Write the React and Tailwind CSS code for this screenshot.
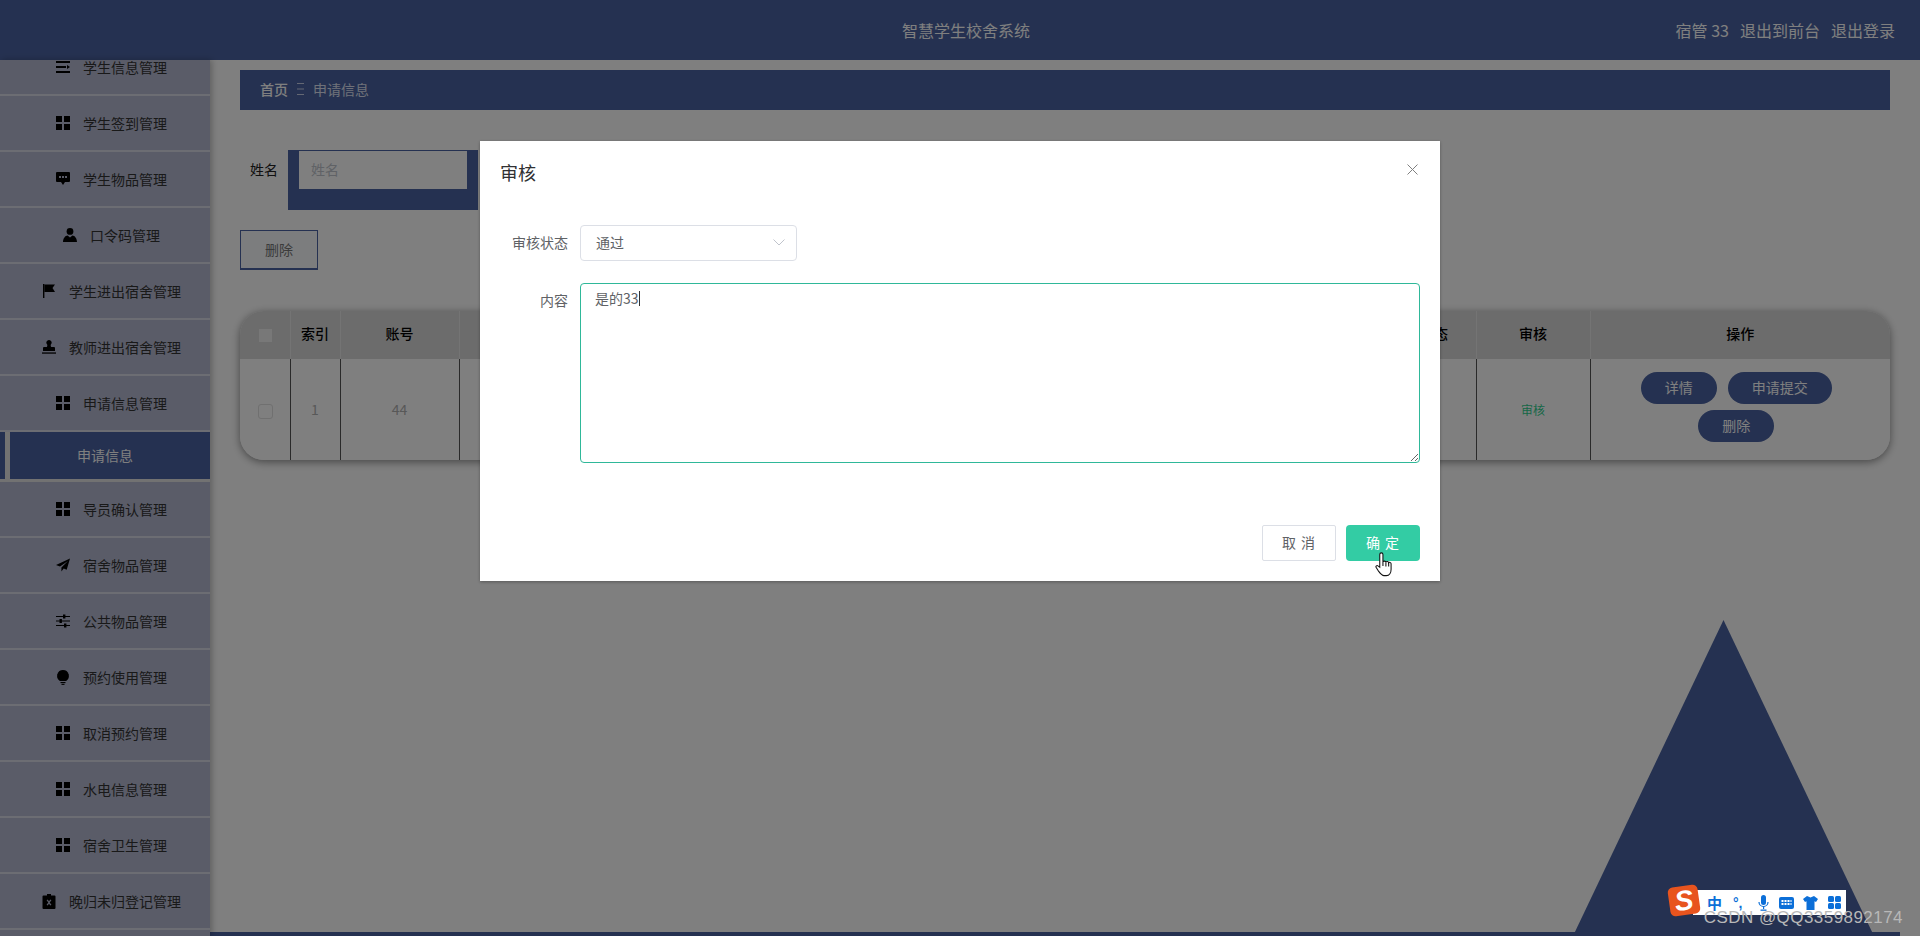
import React from 'react';

// Sidebar glyphs, all on a 14-unit box
const Grid = () => (
  <svg viewBox="0 0 14 14" className="w-[14px] h-[14px]" fill="#000">
    <rect x="0" y="0" width="6" height="6" /><rect x="8" y="0" width="6" height="6" />
    <rect x="0" y="8" width="6" height="6" /><rect x="8" y="8" width="6" height="6" />
  </svg>
);
const Bars = () => (
  <svg viewBox="0 0 14 14" className="w-[14px] h-[14px]" fill="#000">
    <rect x="0" y="1" width="14" height="2" /><rect x="0" y="6" width="10" height="2" />
    <path d="M11 5l3 2-3 2z" /><rect x="0" y="11" width="14" height="2" />
  </svg>
);
const Chat = () => (
  <svg viewBox="0 0 14 14" className="w-[14px] h-[14px]" fill="#000">
    <path fillRule="evenodd" d="M1 0h12a1 1 0 0 1 1 1v8a1 1 0 0 1-1 1H9l-2 3-2-3H1a1 1 0 0 1-1-1V1a1 1 0 0 1 1-1zM3 4v2h2V4zm3 0v2h2V4zm3 0v2h2V4z" />
  </svg>
);
const User = () => (
  <svg viewBox="0 0 14 14" className="w-[14px] h-[14px]" fill="#000">
    <circle cx="7" cy="3.4" r="3.4" /><path d="M0 14c0-4 2.4-6.4 4.6-6.6L7 9.4l2.4-2c2.2.2 4.6 2.6 4.6 6.6z" />
  </svg>
);
const Flag = () => (
  <svg viewBox="0 0 14 14" className="w-[14px] h-[14px]" fill="#000">
    <rect x="1" y="0" width="1.4" height="14" /><path d="M2.4 .5H13L10.5 4 13 8H2.4z" />
  </svg>
);
const Stamp = () => (
  <svg viewBox="0 0 14 14" className="w-[14px] h-[14px]" fill="#000">
    <path d="M7 0a2.6 2.6 0 0 1 2 4.3c-.5.8-.4 1.8.2 2.6H12a1 1 0 0 1 1 1V11H1V7.9a1 1 0 0 1 1-1h2.8c.6-.8.7-1.8.2-2.6A2.6 2.6 0 0 1 7 0z" />
    <rect x="0" y="12.4" width="14" height="1.3" />
  </svg>
);
const Plane = () => (
  <svg viewBox="0 0 14 14" className="w-[14px] h-[14px]" fill="#000">
    <path d="M14 .5L0 7l4 1.6L12 3 5.4 9.4V13.5l2.3-3 3 1.2z" />
  </svg>
);
const Sliders = () => (
  <svg viewBox="0 0 14 14" className="w-[14px] h-[14px]" fill="#000">
    <rect x="0" y="2" width="14" height="1" /><rect x="7" y="0.5" width="2.4" height="4" />
    <rect x="0" y="6.5" width="14" height="1" /><rect x="3.5" y="5" width="2.4" height="4" />
    <rect x="0" y="11" width="14" height="1" /><rect x="8" y="9.5" width="2.4" height="4" />
  </svg>
);
const Bulb = () => (
  <svg viewBox="0 0 14 15" className="w-[14px] h-[15px]" fill="#000">
    <path d="M7 0a6 6 0 0 1 3.2 11H3.8A6 6 0 0 1 7 0z" /><rect x="4.5" y="12" width="5" height="1.1" /><rect x="5.5" y="13.8" width="3" height="1.1" />
  </svg>
);
const Clip = () => (
  <svg viewBox="0 0 14 15" className="w-[14px] h-[15px]" fill="#000">
    <path fillRule="evenodd" d="M5 0h4v1.5h3.5a1 1 0 0 1 1 1V14a1 1 0 0 1-1 1h-11a1 1 0 0 1-1-1V2.5a1 1 0 0 1 1-1H5zM4.6 6.2L6.3 8.5 4.6 10.8l1 .8L7 9.7l1.4 1.9 1-.8L7.7 8.5l1.7-2.3-1-.8L7 7.3 5.6 5.4z" />
  </svg>
);

const menu = [
  ['学生信息管理', Bars],
  ['学生签到管理', Grid],
  ['学生物品管理', Chat],
  ['口令码管理', User],
  ['学生进出宿舍管理', Flag],
  ['教师进出宿舍管理', Stamp],
  ['申请信息管理', Grid],
  ['导员确认管理', Grid, true],
  ['宿舍物品管理', Plane],
  ['公共物品管理', Sliders],
  ['预约使用管理', Bulb],
  ['取消预约管理', Grid],
  ['水电信息管理', Grid],
  ['宿舍卫生管理', Grid],
  ['晚归未归登记管理', Clip],
];

function MenuRow({ label, Icon }) {
  return (
    <div className="h-[56px] border-b-2 border-[#d9dbe6] flex items-center justify-center pl-[13px] gap-[13px] text-[14px] text-[#333]">
      <Icon />
      <span>{label}</span>
    </div>
  );
}

function Sidebar() {
  return (
    <aside className="w-[210px] shrink-0 overflow-hidden bg-[#b4b8d0] shadow-[2px_0_6px_rgba(0,0,0,0.25)] z-10">
      {/* the list is scrolled down a little */}
      <div className="-mt-[20px]">
        {menu.map(([label, Icon, afterActive]) => (
          <React.Fragment key={label}>
            {afterActive && (
              <div className="flex h-[50px] border-b-[3px] border-[#e4e4e4]">
                <div className="w-[5px] bg-[#4b63a2]" />
                <div className="w-[5px] bg-[#e4e4e4]" />
                <div className="flex-1 bg-[#4b63a2] text-white text-[14px] flex items-center justify-start pl-[67px]">申请信息</div>
              </div>
            )}
            <MenuRow label={label} Icon={Icon} />
          </React.Fragment>
        ))}
      </div>
    </aside>
  );
}

function PillButton({ children }) {
  return (
    <button className="h-[32px] w-[76px] rounded-full bg-[#4b63a2] text-white text-[14px] leading-none pb-[2px]">{children}</button>
  );
}

function RecordTable() {
  const widths = [50, 50, 119, 302, 302, 301, 112, 114, 300];
  const heads = ['', '索引', '账号', '姓名', '申请时间', '内容', '审核状态', '审核', '操作'];
  return (
    <div className="mt-[41px] rounded-[24px] overflow-hidden shadow-[0_2px_8px_rgba(0,0,0,0.45)]">
      <table className="w-full table-fixed border-collapse text-[14px]">
        <colgroup>
          {widths.map((w, i) => <col key={i} style={{ width: w }} />)}
        </colgroup>
        <thead>
          <tr className="h-[48px] bg-[#d8d8d8]">
            {heads.map((h, i) => (
              <th key={i} className={`font-medium text-black text-center pb-[3px] ${i ? 'border-l border-[#e8e8e8]' : 'pl-[2px]'}`}>
                {i === 0 ? <span className="inline-block align-middle w-[13px] h-[13px] bg-[#f0f0f0]" /> : h}
              </th>
            ))}
          </tr>
        </thead>
        <tbody>
          <tr className="h-[101px] bg-white text-[#b0b0b0] text-center">
            <td className="pl-[2px]"><span className="inline-block align-middle w-[15px] h-[15px] rounded-[3px] border border-[#e0e0e0]" /></td>
            <td className="border-l border-[#555]">1</td>
            <td className="border-l border-[#555]">44</td>
            <td className="border-l border-[#555]" />
            <td className="border-l border-[#555]" />
            <td className="border-l border-[#555]" />
            <td className="border-l border-[#555]" />
            <td className="border-l border-[#555] text-[12px] text-[#2fd08f]">审核</td>
            <td className="border-l border-[#555] pb-[6px]">
              <div className="flex flex-wrap justify-center gap-x-[11px] gap-y-[6px] pl-[36px] pr-[44px]">
                <PillButton>详情</PillButton>
                <button className="h-[32px] w-[104px] rounded-full bg-[#4b63a2] text-white text-[14px] leading-none pb-[2px]">申请提交</button>
                <PillButton>删除</PillButton>
              </div>
            </td>
          </tr>
        </tbody>
      </table>
    </div>
  );
}

function ReviewDialog() {
  return (
    <div className="absolute inset-0 z-20 bg-black/50 flex justify-center items-start pt-[141px]">
      <div className="relative w-[960px] h-[440px] bg-white shadow-[0_1px_3px_rgba(0,0,0,0.3)] flex flex-col px-[20px] pt-[19px] pb-[20px]">
        <h2 className="text-[18px] leading-[24px] text-[#303133] font-normal">审核</h2>
        <svg viewBox="0 0 11 11" className="absolute top-[23px] right-[22px] w-[11px] h-[11px]" stroke="#808080" strokeWidth="1" fill="none">
          <path d="M.5.5l10 10M10.5.5l-10 10" />
        </svg>

        <div className="mt-[41px] flex items-center">
          <label className="w-[68px] text-right text-[14px] text-[#606266] mr-[12px] shrink-0 pb-[2px]">审核状态</label>
          <div className="w-[217px] h-[36px] rounded-[4px] border border-[#dcdfe6] flex items-center justify-between pl-[15px] pr-[11px] pb-[2px] text-[14px] text-[#606266]">
            <span>通过</span>
            <svg viewBox="0 0 12 7" className="w-[12px] h-[7px]" stroke="#c0c4cc" strokeWidth="1" fill="none">
              <path d="M.5.5L6 6 11.5.5" />
            </svg>
          </div>
        </div>

        <div className="mt-[22px] flex items-start">
          <label className="w-[68px] text-right text-[14px] leading-[36px] text-[#606266] mr-[12px] -mt-[1px] shrink-0">内容</label>
          <div className="w-[840px] h-[180px] rounded-[4px] border border-[#2fb899] pl-[14px] pr-[15px] py-[4px] text-[14px] leading-[21px] text-[#606266] overflow-auto resize">
            是的33<span className="inline-block w-px h-[15px] bg-[#333] align-[-2px]" />
          </div>
        </div>

        <div className="mt-auto flex justify-end gap-[10px]">
          <button className="w-[74px] h-[36px] rounded-[2px] border border-[#dcdfe6] bg-white text-[14px] text-[#606266] tracking-[1px] pb-[2px]">取 消</button>
          <button className="relative w-[74px] h-[36px] rounded-[4px] bg-[#33cca4] text-[14px] text-white tracking-[1px] pb-[2px]">
            确 定
            {/* pointer over the confirm button */}
            <svg viewBox="0 0 17 24" className="absolute left-[29px] top-[26px] w-[18px] h-[26px]" fill="#fff" stroke="#111" strokeWidth="1">
              <path d="M6 1.5c.9 0 1.5.6 1.5 1.5v7c.3-1 2.6-1 2.8.3.3-.9 2.4-.8 2.6.5.4-.6 2.3-.5 2.3 1V17c0 3-1.5 6-4.5 6H8.5C6.5 23 5 21 3.5 19L1 15c-.5-1 .8-2 1.8-1.2L4.5 15V3c0-.9.6-1.5 1.5-1.5z" />
              <path d="M7.5 10v4M10.3 10.3v4M12.9 10.8v3.5" fill="none" />
            </svg>
          </button>
        </div>
      </div>
    </div>
  );
}

function ImeBar() {
  return (
    <div className="absolute z-30 right-[74px] bottom-[21px] h-[25px] w-[153px] bg-white flex items-center pl-[14px] text-[#0c6fd8]">
      <span className="absolute -left-[24px] -top-[4px] w-[30px] h-[29px] rounded-[5px] bg-[#e8541e] -rotate-[8deg] flex items-center justify-center text-white font-bold italic text-[28px] leading-none [font-family:'Liberation_Sans',sans-serif]">S</span>
      <span className="text-[15px] font-bold leading-none w-[26px]">中</span>
      <span className="text-[14px] font-bold leading-none w-[25px] [font-family:'Liberation_Sans',sans-serif]">°,</span>
      <svg viewBox="0 0 11 16" className="w-[11px] h-[16px] mr-[10px]" fill="#0c6fd8">
        <rect x="3" y="0" width="5" height="10" rx="2.5" />
        <path d="M1 7a4.5 4.5 0 0 0 9 0" fill="none" stroke="#0c6fd8" strokeWidth="1.2" />
        <rect x="5" y="11" width="1.2" height="3" /><rect x="2.5" y="14.5" width="6" height="1.3" />
      </svg>
      <svg viewBox="0 0 15 12" className="w-[15px] h-[12px] mr-[9px]">
        <rect width="15" height="12" rx="2" fill="#0c6fd8" />
        <path d="M2.5 3h2v2h-2zm3 0h2v2h-2zm3 0h2v2h-2zm3 0h1v2h-1zm-9 3h2v2h-2zm3 0h2v2h-2zm3 0h2v2h-2zm3 0h1v2h-1z" fill="#fff" />
      </svg>
      <svg viewBox="0 0 15 14" className="w-[15px] h-[14px] mr-[10px]" fill="#0c6fd8">
        <path d="M4 0l3.5 1.5L11 0l4 3-2 3-1.500-.8V14h-8V5.200L2 6 0 3z" />
      </svg>
      <svg viewBox="0 0 13 13" className="w-[13px] h-[13px]" fill="#0c6fd8">
        <rect width="6" height="6" rx="1.5" /><rect x="7" width="6" height="6" rx="1.5" />
        <rect y="7" width="6" height="6" rx="1.5" /><rect x="7" y="7" width="6" height="6" rx="1.5" />
      </svg>
    </div>
  );
}

export default function App() {
  return (
    <div className="relative h-[936px] w-full overflow-hidden flex flex-col bg-white [font-family:'Noto_Sans_CJK_SC','Liberation_Sans',sans-serif]">
      <header className="h-[60px] shrink-0 bg-[#4b63a2] grid grid-cols-[1fr_auto_1fr] items-center text-white text-[16px] z-10">
        <div />
        <div className="pl-[12px]">智慧学生校舍系统</div>
        <div className="flex justify-end gap-[11px] pr-[25px]">
          <span>宿管 33</span>
          <span>退出到前台</span>
          <span>退出登录</span>
        </div>
      </header>

      <div className="flex flex-1 min-h-0">
        <Sidebar />
        <main className="relative flex-1 px-[30px] pt-[10px]">
          {/* backdrop triangle and bottom rule */}
          <div className="absolute bottom-0 right-[46px] w-[301px] h-[316px] bg-[#4b63a2] [clip-path:polygon(50%_0,100%_100%,0_100%)]" />
          <div className="absolute bottom-0 left-0 right-[20px] h-[4px] bg-[#4b63a2]" />

          <nav className="h-[40px] bg-[#4b63a2] flex items-center pl-[20px] pb-[2px] text-[14px] text-white">
            <span className="font-medium">首页</span>
            <svg viewBox="0 0 7 14" className="w-[7px] h-[14px] mx-[9px]" fill="#c8d0e8">
              <rect y="1" width="7" height="1" /><rect y="6.5" width="7" height="1" /><rect y="12" width="7" height="1" />
            </svg>
            <span className="text-[#dfe3f2]">申请信息</span>
          </nav>

          <div className="mt-[40px] flex">
            <label className="w-[48px] pl-[10px] h-[38px] leading-[38px] text-[14px] text-[#222]">姓名</label>
            <div className="w-[190px] h-[60px] bg-[#4b63a2] pl-[11px] pr-[11px] pt-px">
              <input readOnly placeholder="姓名" className="w-full h-[38px] bg-white px-[12px] pb-[2px] text-[14px] placeholder:text-[#c0c4cc] outline-none" />
            </div>
          </div>

          <button className="block mt-[20px] w-[78px] h-[40px] border border-[#4b63a2] border-b-2 bg-[#f8fafd] text-[14px] text-[#777]">删除</button>

          <RecordTable />
        </main>
      </div>

      <ReviewDialog />
      <ImeBar />
      <div className="absolute z-30 right-[17px] bottom-[7px] text-[17px] leading-[22px] tracking-[0.45px] text-[#b8b8b8] [font-family:'Liberation_Sans',sans-serif]">CSDN @QQ3359892174</div>
    </div>
  );
}
